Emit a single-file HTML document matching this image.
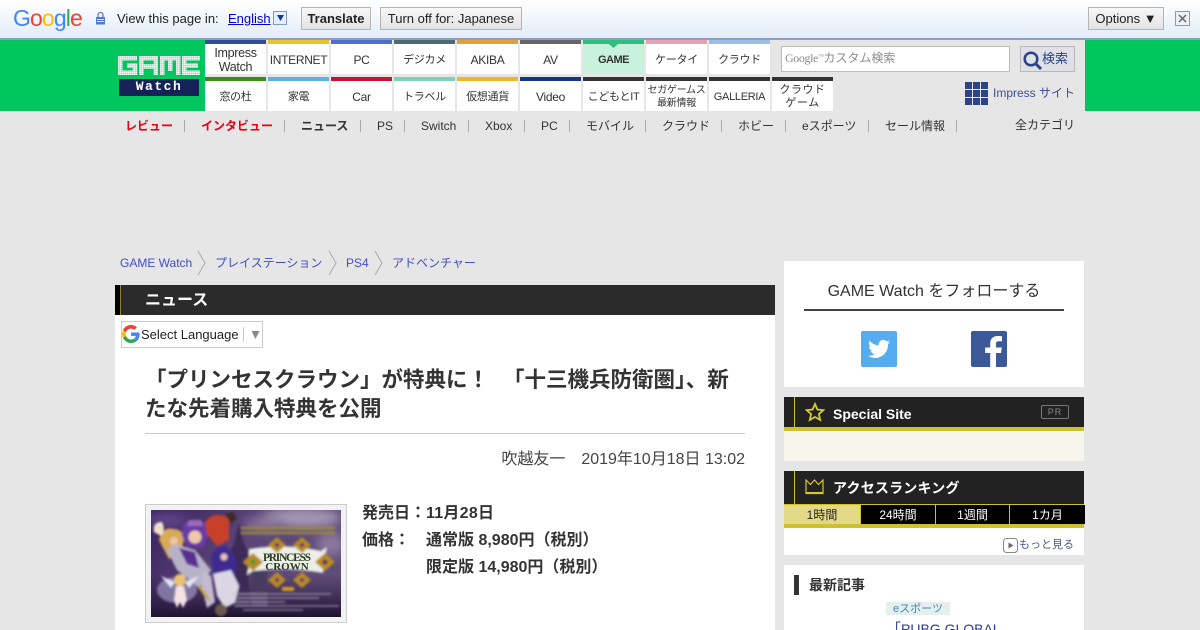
<!DOCTYPE html>
<html lang="ja"><head><meta charset="utf-8"><title>GAME Watch</title>
<style>
html,body{margin:0;padding:0;overflow:hidden;background:#e6e6e6}
body{width:1200px;height:630px;position:relative;font-family:"Liberation Sans","Noto Sans CJK JP",sans-serif;color:#333}
.a,.c,.n,.t{position:absolute}
.a{white-space:nowrap}
.c{background:#fff;width:61px;height:34px;font-size:12px;line-height:14px;text-align:center;color:#333;display:flex;align-items:center;justify-content:center;letter-spacing:-.3px;box-sizing:border-box;border-top:4px solid #000;padding-top:1px}
.r2{top:77px}.r1{top:40px}
.n{top:119px;font-size:12px;line-height:14px;white-space:nowrap;color:#333}
.s{top:120px;position:absolute;width:1px;height:12px;background:#aaa}
.b{position:absolute;top:256px;font-size:12px;line-height:14px;color:#3f4fc8;white-space:nowrap}
.h{font-weight:bold;font-size:21.5px;line-height:29px;color:#333}
.tab{position:absolute;top:505px;height:19px;font-size:12px;line-height:20px;text-align:center;color:#fff;background:#000}
</style></head><body>
<!-- translate bar -->
<div class="a" style="left:0;top:0;width:1200px;height:38px;background:linear-gradient(#fff,#e3ecf8)"></div>
<div class="a" style="left:0;top:38px;width:1200px;height:2px;background:#8e9fc4"></div>
<div class="a" style="left:13px;top:3px;font-size:23px;line-height:30px;letter-spacing:-.9px"><span style="color:#4285f4">G</span><span style="color:#ea4335">o</span><span style="color:#fbbc05">o</span><span style="color:#4285f4">g</span><span style="color:#34a853">l</span><span style="color:#ea4335">e</span></div>
<svg class="a" style="left:95px;top:11px" width="11" height="14" viewBox="0 0 11 14"><path d="M3 6.500V4a2.500 2.500 0 0 1 5 0V6.500" fill="none" stroke="#5b82c6" stroke-width="1.300"/><rect x="1" y="6" width="9" height="7.500" fill="#4f7dc8"/><path d="M2 8.500h7M2 10.500h7" stroke="#d5e1f5"/></svg>
<div class="a" style="left:117px;top:11px;font-size:13px;line-height:15px;color:#222">View this page in:</div>
<div class="a" style="left:228px;top:11px;font-size:13px;line-height:15px;color:#00c;text-decoration:underline">English</div>
<div class="a" style="left:273px;top:11px;width:14px;height:14px;border:1px solid #7f9db9;background:#e6eef8;box-sizing:border-box"></div>
<svg class="a" style="left:277px;top:15px" width="7" height="6"><path d="M0 0h7L3.500 6z" fill="#123a8c"/></svg>
<div class="a" style="left:301px;top:7px;width:70px;height:23px;box-sizing:border-box;border:1px solid #b5b5b5;background:linear-gradient(#f8f8f8,#e2e2e2);font-size:13px;line-height:21px;text-align:center;font-weight:bold;color:#222">Translate</div>
<div class="a" style="left:380px;top:7px;width:142px;height:23px;box-sizing:border-box;border:1px solid #b5b5b5;background:linear-gradient(#f8f8f8,#e2e2e2);font-size:13px;line-height:21px;text-align:center;color:#222">Turn off for: Japanese</div>
<div class="a" style="left:1088px;top:7px;width:76px;height:23px;box-sizing:border-box;border:1px solid #b5b5b5;background:linear-gradient(#f8f8f8,#e2e2e2);font-size:13px;line-height:21px;text-align:center;color:#222">Options ▼</div>
<div class="a" style="left:1175px;top:11px;width:15px;height:15px;box-sizing:border-box;border:1px solid #999;background:#eef2f8"></div>
<svg class="a" style="left:1175px;top:11px" width="15" height="15"><path d="M4 4l7 7M11 4l-7 7" stroke="#666" stroke-width="1.500"/></svg>

<!-- header -->
<div class="a" style="left:0;top:40px;width:205px;height:71px;background:#00c65e"></div>
<div class="a" style="left:1085px;top:40px;width:115px;height:71px;background:#00c65e"></div>
<svg class="a" style="left:118px;top:56px" width="83" height="19">
<defs><pattern id="d" width="2" height="2" patternUnits="userSpaceOnUse"><rect width="2" height="2" fill="#7fe0ad"/><rect width="1.500" height="1.500" fill="#f6fdf9"/></pattern></defs>
<g fill="none" stroke="url(#d)" stroke-width="4.500">
<path d="M19 2.250H2.250V16.750H17V9.500H9"/>
<path d="M23.250 19V2.250H37.750V19M23.250 10.500H37.750"/>
<path d="M44.250 19V2.250H60.250V19M52.250 2.250V15"/>
<path d="M82 2.250H66.250V16.750H82M66.250 9.500H80"/>
</g></svg>
<div class="a" style="left:119px;top:79px;width:80px;height:17px;background:#142257;color:#fff;font-family:'Liberation Mono',monospace;font-weight:bold;font-size:13px;line-height:16px;text-align:center;letter-spacing:1.500px">Watch</div>

<div class="c r1" style="left:205px;border-color:#2f4f94;font-size:12.500px">Impress<br>Watch</div>
<div class="c r1" style="left:268px;border-color:#e8c52f">INTERNET</div>
<div class="c r1" style="left:331px;border-color:#4f6fd0">PC</div>
<div class="c r1" style="left:394px;border-color:#4c6a70;font-size:11px">デジカメ</div>
<div class="c r1" style="left:457px;border-color:#e0a040">AKIBA</div>
<div class="c r1" style="left:520px;border-color:#666">AV</div>
<div class="c r1" style="left:583px;border-color:#2fbf7a;background:#c9f2dc;font-weight:bold;font-size:11px;letter-spacing:-.5px">GAME</div>
<svg class="a" style="left:609px;top:44px" width="9" height="4"><path d="M0 0h9L4.500 4z" fill="#2fbf7a"/></svg>
<div class="c r1" style="left:646px;border-color:#e6a3b4;font-size:11px">ケータイ</div>
<div class="c r1" style="left:709px;border-color:#9cc0e0;font-size:11px">クラウド</div>

<div class="c r2" style="left:205px;border-color:#3a8e12;font-size:11px">窓の杜</div>
<div class="c r2" style="left:268px;border-color:#5ab2ea;font-size:11px">家電</div>
<div class="c r2" style="left:331px;border-color:#cf1030">Car</div>
<div class="c r2" style="left:394px;border-color:#7bd2b6;font-size:11px">トラベル</div>
<div class="c r2" style="left:457px;border-color:#f2b428;font-size:11px">仮想通貨</div>
<div class="c r2" style="left:520px;border-color:#15387f">Video</div>
<div class="c r2" style="left:583px;border-color:#333;font-size:11px">こどもとIT</div>
<div class="c r2" style="left:646px;border-color:#333;font-size:10px;line-height:13px">セガゲームス<br>最新情報</div>
<div class="c r2" style="left:709px;border-color:#333;font-size:11px">GALLERIA</div>
<div class="c r2" style="left:772px;border-color:#333;font-size:11px;line-height:13px;letter-spacing:.5px">クラウド<br>ゲーム</div>

<div class="a" style="left:781px;top:46px;width:229px;height:26px;box-sizing:border-box;background:#fff;border:1px solid #bbb;font-size:12px;line-height:22px;color:#8c8c8c;padding-left:3px"><span style="font-family:'Liberation Serif',serif;letter-spacing:-.4px">Google<span style="font-size:6px;vertical-align:4px;line-height:0">™</span></span>カスタム検索</div>
<div class="a" style="left:1020px;top:46px;width:55px;height:26px;box-sizing:border-box;background:#dfe1e6;border:1px solid #b5b8c0"></div>
<svg class="a" style="left:1023px;top:48px" width="20" height="22"><circle cx="8" cy="11" r="6.300" fill="none" stroke="#2a4488" stroke-width="2.500"/><path d="M12.500 15.500l5.500 5.500" stroke="#2a4488" stroke-width="3"/></svg>
<div class="a" style="left:1042px;top:51px;font-size:13px;line-height:15px;color:#2a4488">検索</div>
<svg class="a" style="left:965px;top:82px" width="23" height="23" fill="#2b4488"><rect width="7" height="7"/><rect x="8" width="7" height="7"/><rect x="16" width="7" height="7"/><rect y="8" width="7" height="7"/><rect x="8" y="8" width="7" height="7"/><rect x="16" y="8" width="7" height="7"/><rect y="16" width="7" height="7"/><rect x="8" y="16" width="7" height="7"/><rect x="16" y="16" width="7" height="7"/></svg>
<div class="a" style="left:993px;top:86px;font-size:12px;line-height:14px;color:#3c5096">Impress サイト</div>

<!-- sub nav -->
<div class="n" style="left:125px;color:#e60012;font-weight:bold">レビュー</div><div class="s" style="left:184px"></div>
<div class="n" style="left:201px;color:#e60012;font-weight:bold">インタビュー</div><div class="s" style="left:284px"></div>
<div class="n" style="left:301px;font-weight:bold">ニュース</div><div class="s" style="left:360px"></div>
<div class="n" style="left:377px">PS</div><div class="s" style="left:404px"></div>
<div class="n" style="left:421px">Switch</div><div class="s" style="left:468px"></div>
<div class="n" style="left:485px">Xbox</div><div class="s" style="left:524px"></div>
<div class="n" style="left:541px">PC</div><div class="s" style="left:569px"></div>
<div class="n" style="left:586px">モバイル</div><div class="s" style="left:645px"></div>
<div class="n" style="left:662px">クラウド</div><div class="s" style="left:721px"></div>
<div class="n" style="left:738px">ホビー</div><div class="s" style="left:785px"></div>
<div class="n" style="left:802px">eスポーツ</div><div class="s" style="left:868px"></div>
<div class="n" style="left:885px">セール情報</div><div class="s" style="left:956px"></div>
<div class="n" style="left:1015px;top:118px">全カテゴリ</div>

<!-- breadcrumb -->
<div class="b" style="left:120px">GAME Watch</div>
<div class="b" style="left:215px">プレイステーション</div>
<div class="b" style="left:346px">PS4</div>
<div class="b" style="left:392px">アドベンチャー</div>
<svg class="a" style="left:196px;top:250px" width="200" height="26" fill="none" stroke="#aaa"><path d="M2 1l7 12-7 12"/><path d="M133 1l7 12-7 12"/><path d="M179 1l7 12-7 12"/></svg>

<!-- main column -->
<div class="a" style="left:115px;top:285px;width:660px;height:345px;background:#fff"></div>
<div class="a" style="left:115px;top:285px;width:660px;height:30px;background:#2b2b2b"></div>
<div class="a" style="left:115px;top:285px;width:5px;height:30px;background:#000"></div>
<div class="a" style="left:120px;top:285px;width:1px;height:30px;background:#8a8430"></div>
<div class="a" style="left:145px;top:292px;font-size:16px;line-height:17px;font-weight:bold;color:#fff">ニュース</div>

<div class="a" style="left:121px;top:321px;width:142px;height:27px;box-sizing:border-box;border:1px solid #ccc;background:#fff"></div>
<svg class="a" style="left:122px;top:325px" width="18" height="18" viewBox="0 0 48 48"><path fill="#ea4335" d="M24 9.500c3.500 0 6.700 1.300 9.100 3.500l6.800-6.800C35.800 2.400 30.200 0 24 0 14.600 0 6.500 5.400 2.600 13.200l7.900 6.200C12.400 13.700 17.700 9.500 24 9.500z"/><path fill="#4285f4" d="M47 24.500c0-1.600-.1-3.100-.4-4.500H24v9h13c-.6 3-2.300 5.500-4.800 7.200l7.700 6C44.400 38 47 31.800 47 24.500z"/><path fill="#fbbc05" d="M10.500 28.600c-.5-1.400-.8-3-.8-4.600s.3-3.200.8-4.600l-7.900-6.200C.9 16.500 0 20.100 0 24s.9 7.500 2.600 10.800z"/><path fill="#34a853" d="M24 48c6.500 0 11.900-2.100 15.900-5.800l-7.700-6c-2.200 1.500-4.900 2.300-8.200 2.300-6.300 0-11.600-4.200-13.500-9.900l-7.900 6.200C6.500 42.600 14.600 48 24 48z"/></svg>
<div class="a" style="left:141px;top:327px;font-size:13px;line-height:15px;color:#222">Select Language</div>
<div class="a" style="left:243px;top:327px;width:1px;height:15px;background:#ccc"></div>
<svg class="a" style="left:251px;top:331px" width="9" height="8"><path d="M0.500 0h8L4.500 8z" fill="#888"/></svg>

<div class="a h" style="left:145px;top:366px">「プリンセスクラウン」が特典に！ <span style="margin-left:8px">「十三機兵防衛圏」、新</span></div>
<div class="a h" style="left:145px;top:395px">たな先着購入特典を公開</div>
<div class="a" style="left:145px;top:433px;width:600px;height:1px;background:#ccc"></div>
<div class="a" style="right:455px;top:450px;font-size:16px;line-height:19px;color:#444">吹越友一　2019年10月18日 13:02</div>

<div class="a" style="left:145px;top:504px;width:202px;height:119px;box-sizing:border-box;border:1px solid #ccc;background:#f2f2f2"></div>
<svg class="a" style="left:151px;top:510px" width="190" height="107" viewBox="0 0 190 107">
<defs>
<linearGradient id="g" x1="0" y1="0" x2="1" y2=".4"><stop offset="0" stop-color="#38225e"/><stop offset=".5" stop-color="#5a4478"/><stop offset="1" stop-color="#5f4d78"/></linearGradient>
<linearGradient id="f" x1="0" y1="0" x2="0" y2="1"><stop offset=".6" stop-color="#2a1a40" stop-opacity="0"/><stop offset="1" stop-color="#1e1230"/></linearGradient>
<filter id="b" x="-5%" y="-5%" width="110%" height="110%"><feGaussianBlur stdDeviation="1"/></filter>
<filter id="b2" x="-30%" y="-30%" width="160%" height="160%"><feGaussianBlur stdDeviation="5"/></filter>
</defs>
<rect width="190" height="107" fill="url(#g)"/>
<g filter="url(#b2)"><ellipse cx="150" cy="8" rx="40" ry="10" fill="#a596b4"/><ellipse cx="115" cy="14" rx="22" ry="7" fill="#857398"/><ellipse cx="180" cy="34" rx="14" ry="12" fill="#8a789e"/><ellipse cx="15" cy="10" rx="22" ry="7" fill="#5e4488"/></g>
<rect width="190" height="107" fill="url(#f)"/>
<g filter="url(#b)">
<path d="M78 96V42l5-8 5-22 5 22 5 8v54z" fill="#3e2c56"/><path d="M100 96V55l8-6 8 6v41z" fill="#4a3a60"/>
<path d="M8 30q4-14 14-11 10 0 11 10l-3 14-12 6z" fill="#d9aa58"/><path d="M3 22q-2-10 8-10 4 8-1 14z" fill="#eee0c8"/><circle cx="23" cy="31" r="4" fill="#eec4a8"/>
<path d="M16 40l8-6 20 6 16 20-12 18-22-18z" fill="#b8b2c8"/><path d="M28 38l16 4 4 16-12-4z" fill="#5a2f94"/>
<path d="M32 14q12-8 24 0l2 10-6 14-16-2-5-10z" fill="#6a3aa4"/><circle cx="44" cy="27" r="6.500" fill="#efc8ac"/><path d="M38 10h12l2 6H36z" fill="#9c6ab8"/>
<path d="M54 12q8-10 18-6l8 2-2 6 0 16-12 6-10-12z" fill="#c8402c"/><path d="M74 4l8-2 4 6-6 6z" fill="#3a2a28"/>
<path d="M60 48q4-14 16-12l10 14-2 16-14 4-8-8z" fill="#3e2a90"/><circle cx="73" cy="47" r="3.500" fill="#e8bfae"/>
<path d="M62 64l18-4 8 16-4 16-10 6-8-12z" fill="#dcd6e4"/><path d="M52 60l8 6 4 26-8 6-6-24z" fill="#c4bad2"/><path d="M48 76l10 14" stroke="#c8a838" stroke-width="3"/>
<ellipse cx="26" cy="80" rx="20" ry="13" fill="#a49cc8" opacity=".65"/>
<path d="M10 66l14 6-4 6zM48 66l-14 6 4 6z" fill="#e8e4f4"/>
<circle cx="29" cy="70" r="6" fill="#e8c470"/><path d="M25 76h8l3 14-4 8-3-6-3 6-3-8z" fill="#f4e2e4"/>
<circle cx="70" cy="100" r="6" fill="#6a5a4c"/>
<path d="M90 18h94M90 23h94" stroke="#a8902a" stroke-width="2.500" opacity=".8"/>
<path d="M98 39q38-6 72 2l6-4-2 10-2 16q-34-6-70-2l-6 4 2-10z" fill="#ecefe6"/>
<g fill="#b88a20"><path d="M102 43l10 9-10 9-10-9z"/><path d="M174 43l10 9-10 9-10-9z"/><path d="M126 27l9 8-9 8-9-8z"/><path d="M151 27l9 8-9 8-9-8z"/><path d="M126 62l9 8-9 8-9-8z"/><path d="M151 62l9 8-9 8-9-8z"/></g>
<g fill="#5a2a6a"><circle cx="126" cy="35" r="2"/><circle cx="151" cy="35" r="2"/><circle cx="126" cy="70" r="2"/><circle cx="151" cy="70" r="2"/><circle cx="102" cy="52" r="2.500" fill="#3f9a3a"/><circle cx="174" cy="52" r="2.500"/></g>
<rect x="131" y="77" width="12" height="4" fill="#d89a20"/>
<path d="M82 84h98M84 88h84M84 92h50M84 96h104M92 100h60" stroke="#d2c2dc" stroke-width="1.300" opacity=".65"/>
</g>
<text x="136" y="51" text-anchor="middle" font-family="Liberation Serif,serif" font-weight="bold" font-size="11.500" fill="#2c3a20" textLength="48">PRINCESS</text>
<text x="136" y="60" text-anchor="middle" font-family="Liberation Serif,serif" font-weight="bold" font-size="11" fill="#2c3a20">CROWN</text>
</svg>

<div class="a" style="left:362px;top:504px;font-size:16px;line-height:19px;font-weight:bold">発売日：<span style="letter-spacing:.25px">11月28日</span></div>
<div class="a" style="left:362px;top:531px;font-size:16px;line-height:19px;font-weight:bold">価格：</div>
<div class="a" style="left:426px;top:531px;font-size:16px;line-height:19px;font-weight:bold">通常版 8,980円（税別）</div>
<div class="a" style="left:426px;top:558px;font-size:16px;line-height:19px;font-weight:bold">限定版 14,980円（税別）</div>

<!-- sidebar -->
<div class="a" style="left:784px;top:261px;width:300px;height:126px;background:#fff"></div>
<div class="a" style="left:784px;top:282px;width:300px;text-align:center;font-size:16px;line-height:19px;color:#333">GAME Watch をフォローする</div>
<div class="a" style="left:804px;top:309px;width:260px;height:2px;background:#444"></div>
<div class="a" style="left:861px;top:331px;width:36px;height:36px;border-radius:2px;background:#55acee"></div>
<svg class="a" style="left:867px;top:337px" width="24" height="24" viewBox="0 0 24 24"><path fill="#fff" d="M23 5a9 9 0 0 1-2.600.7 4.500 4.500 0 0 0 2-2.500 9 9 0 0 1-2.900 1.100 4.500 4.500 0 0 0-7.700 4.100A12.900 12.900 0 0 1 2.500 3.700a4.500 4.500 0 0 0 1.400 6.100 4.500 4.500 0 0 1-2-.6 4.500 4.500 0 0 0 3.600 4.500 4.500 4.500 0 0 1-2 .1 4.500 4.500 0 0 0 4.200 3.100A9.100 9.100 0 0 1 1 18.800 12.900 12.900 0 0 0 21 7.300 9 9 0 0 0 23 5z"/></svg>
<div class="a" style="left:971px;top:331px;width:36px;height:36px;border-radius:2px;background:#3b5998"></div>
<svg class="a" style="left:971px;top:331px" width="36" height="36"><path fill="#fff" d="M25 36V22h5l.8-5.500H25v-3.500c0-1.600.5-2.700 2.800-2.700H31V5.300c-.6-.1-2.300-.3-4.400-.3-4.400 0-7.400 2.700-7.400 7.600v3.900h-5V22h5v14z"/></svg>

<div class="a" style="left:784px;top:397px;width:300px;height:30px;background:#222"></div>
<div class="a" style="left:784px;top:427px;width:300px;height:4px;background:#cfc12e"></div>
<div class="a" style="left:784px;top:431px;width:300px;height:30px;background:#f7f6ec"></div>
<div class="a" style="left:794px;top:397px;width:1px;height:34px;background:#cfc12e"></div>
<svg class="a" style="left:805px;top:402px" width="20" height="20" viewBox="0 0 20 20"><path d="M10 2l2.400 5.500 6 .6-4.500 4 1.300 5.900L10 15l-5.200 3 1.300-5.900-4.500-4 6-.6z" fill="none" stroke="#d6c92e" stroke-width="1.800"/></svg>
<div class="a" style="left:833px;top:406px;font-size:14px;line-height:16px;font-weight:bold;color:#fff">Special Site</div>
<div class="a" style="left:1041px;top:405px;width:28px;height:14px;box-sizing:border-box;border:1px solid #777;border-radius:2px;font-size:9px;line-height:12px;text-align:center;color:#888;letter-spacing:1px">PR</div>

<div class="a" style="left:784px;top:471px;width:300px;height:34px;background:#222"></div>
<div class="a" style="left:794px;top:471px;width:1px;height:33px;background:#cfc12e"></div>
<svg class="a" style="left:805px;top:479px" width="19" height="16"><path d="M1 1l4.500 4.500L9.500 1l4 4.500L18 1v13.500H1z" fill="none" stroke="#d6c92e" stroke-width="1.200"/><rect x="1" y="13" width="17" height="2" fill="#d6c92e"/></svg>
<div class="a" style="left:833px;top:480px;font-size:14px;line-height:16px;font-weight:bold;color:#fff;letter-spacing:.2px">アクセスランキング</div>
<div class="a" style="left:784px;top:504px;width:300px;height:1px;background:#cfc12e"></div>
<div class="tab" style="left:784px;width:76px;background:#e3d987;color:#222">1時間</div>
<div class="tab" style="left:860px;width:74px;border-left:1px solid #cfc12e">24時間</div>
<div class="tab" style="left:935px;width:73px;border-left:1px solid #cfc12e">1週間</div>
<div class="tab" style="left:1009px;width:75px;border-left:1px solid #cfc12e">1カ月</div>
<div class="a" style="left:784px;top:524px;width:300px;height:4px;background:#cfc12e"></div>
<div class="a" style="left:784px;top:528px;width:300px;height:27px;background:#fff"></div>
<svg class="a" style="left:1003px;top:538px" width="15" height="15"><rect x=".5" y=".5" width="14" height="14" rx="3" fill="#fff" stroke="#888"/><path d="M5.500 4.500l5 3-5 3z" fill="#666"/></svg>
<div class="a" style="left:1019px;top:539px;font-size:11px;line-height:13px;color:#4a5a90">もっと見る</div>

<div class="a" style="left:784px;top:565px;width:300px;height:65px;background:#fff"></div>
<div class="a" style="left:794px;top:575px;width:5px;height:20px;background:#333"></div>
<div class="a" style="left:809px;top:577px;font-size:14px;line-height:16px;font-weight:bold;color:#333">最新記事</div>
<div class="a" style="left:886px;top:602px;width:64px;height:13px;background:#e6eeee;font-size:11px;line-height:14px;text-align:center;color:#3a8fb0">eスポーツ</div>
<div class="a" style="left:887px;top:621px;font-size:14px;line-height:16px;color:#2b3a8c">「PUBG GLOBAL</div>
</body></html>
